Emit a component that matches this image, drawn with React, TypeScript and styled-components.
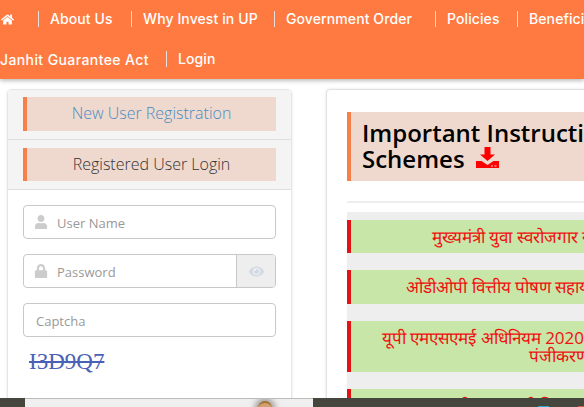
import React from 'react';
import styled, {createGlobalStyle} from 'styled-components';
import {FaHome, FaUser, FaLock, FaEye} from 'react-icons/fa';

const MENU_TOP = [
    {label: 'About Us', width: 93},
    {label: 'Why Invest in UP', width: 143},
    {label: 'Government Order', width: 161},
    {label: 'Policies', width: 82},
    {label: 'Beneficiary', width: 110},
];

const SCHEMES = [
    'मुख्यमंत्री युवा स्वरोजगार योजना हेतु निर्देश',
    'ओडीओपी वित्तीय पोषण सहायता योजना हेतु निर्देश',
    'यूपी एमएसएमई अधिनियम 2020 के तहत उद्यमियों के लिए\nपंजीकरण',
    'मुख्यमंत्री युवा उद्यमी विकास अभियान हेतु निर्देश',
];

export default function App() {
    return (
        <Page>
            <GlobalStyle/>
            <Header>
                <MenuRow>
                    <HomeLink><FaHome size={13}/></HomeLink>
                    {MENU_TOP.map(item => <MenuItem key={item.label} width={item.width}>{item.label}</MenuItem>)}
                </MenuRow>
                <MenuRow>
                    <MenuFirst>Janhit Guarantee Act</MenuFirst>
                    <MenuItem width={70}>Login</MenuItem>
                </MenuRow>
            </Header>
            <Content>
                <LoginCard>
                    <TabRow>
                        <TabLabel active>New User Registration</TabLabel>
                    </TabRow>
                    <TabRow>
                        <TabLabel>Registered User Login</TabLabel>
                    </TabRow>
                    <Form>
                        <Field>
                            <FieldIcon><FaUser size={14}/></FieldIcon>
                            <Placeholder>User Name</Placeholder>
                        </Field>
                        <Field>
                            <FieldIcon><FaLock size={14}/></FieldIcon>
                            <Placeholder>Password</Placeholder>
                            <EyeAddon><FaEye size={15}/></EyeAddon>
                        </Field>
                        <Field>
                            <CaptchaPlaceholder>Captcha</CaptchaPlaceholder>
                        </Field>
                        <Captcha>I3D9Q7</Captcha>
                    </Form>
                </LoginCard>
                <MainCard>
                    <Heading>
                        Important Instructions for<br/>Schemes
                        <DownloadIcon viewBox="0 0 23 21">
                            <path d="M8.500 0h6v7.500H19L11.500 14 4 7.500h4.500z"/>
                            <path fillRule="evenodd" d="M0 14h5.500l6 4 6-4H23v7H0zM15 18.500v1h2v-1zM18.500 18.500v1h2v-1z"/>
                        </DownloadIcon>
                    </Heading>
                    <Divider/>
                    <SchemeList>
                        {SCHEMES.map(s => <Scheme key={s}>{s}</Scheme>)}
                    </SchemeList>
                </MainCard>
            </Content>
            <BottomBar>
                <DarkEnd/>
                <LightPart><Person/></LightPart>
                <DarkPart>
                    <Speck color="#2aa7c9" left={225} width={11}/>
                    <Speck color="#d9583a" left={265} width={7}/>
                </DarkPart>
            </BottomBar>
        </Page>
    );
}

const GlobalStyle = createGlobalStyle`
html, body {
    margin: 0;
    height: 100%;
    overflow: hidden;
    background: #fff;
}
`;

const Page = styled.div`
position: relative;
width: 584px;
height: 407px;
overflow: hidden;
font-family: "Open Sans", sans-serif;
`;

const Header = styled.header`
height: 79px;
background: #ff7a40;
box-shadow: 0 2px 4px rgba(0, 0, 0, 0.25);
color: #fff;
font-family: Inter, sans-serif;
font-size: 14px;
font-weight: 500;
letter-spacing: 0.1px;
display: flex;
flex-direction: column;
gap: 2px;
`;

const MenuRow = styled.div`
display: flex;
height: 38px;
align-items: center;
white-space: nowrap;
`;

const HomeLink = styled.span`
display: flex;
width: 38px;
flex-shrink: 0;
padding-left: 1px;
box-sizing: border-box;
`;

const MenuItem = styled.span<{width: number}>`
border-left: 1px solid #e6dcd8;
line-height: 16px;
padding-left: 11px;
box-sizing: border-box;
flex-shrink: 0;
width: ${props => props.width}px;
`;

const MenuFirst = styled.span`
width: 166px;
flex-shrink: 0;
letter-spacing: 0.4px;
`;

const Content = styled.main`
display: flex;
align-items: flex-start;
padding: 10px 0 0 7px;
`;

const LoginCard = styled.section`
width: 285px;
height: 330px;
flex-shrink: 0;
box-sizing: border-box;
border: 1px solid #e6e6e6;
border-radius: 4px;
box-shadow: 0 1px 3px rgba(0, 0, 0, 0.1);
`;

const TabRow = styled.div`
padding: 8px 15px;
height: 50px;
box-sizing: border-box;
background: #f4f4f4;
border-bottom: 1px solid #dedede;
display: flex;
&:first-child {
    padding-top: 7px;
}
`;

const TabLabel = styled.div<{active?: boolean}>`
flex: 1;
display: flex;
align-items: center;
justify-content: center;
padding-bottom: 2px;
background: #efd9ce;
border-left: 4px solid #f7804a;
font-size: 16px;
font-weight: 300;
color: ${props => props.active ? '#4a8cc0' : '#333'};
`;

const Form = styled.div`
padding: 15px 15px 0;
display: flex;
flex-direction: column;
gap: 15px;
`;

const Field = styled.div`
height: 34px;
box-sizing: border-box;
border: 1px solid #c8c8c8;
border-radius: 4px;
display: flex;
align-items: center;
overflow: hidden;
`;

const FieldIcon = styled.span`
display: flex;
width: 33px;
justify-content: center;
padding-left: 1px;
box-sizing: border-box;
color: #ccc;
`;

const Placeholder = styled.span`
flex: 1;
padding-top: 2px;
font-size: 13px;
color: #999;
`;

const CaptchaPlaceholder = styled(Placeholder)`
padding-left: 12px;
`;

const EyeAddon = styled.span`
width: 38px;
align-self: stretch;
display: flex;
align-items: center;
justify-content: center;
background: #eee;
border-left: 1px solid #c8c8c8;
color: #d3d9e4;
`;

const Captcha = styled.div`
margin-top: -5px;
width: 90px;
height: 30px;
font-family: "Liberation Serif", serif;
font-size: 23px;
line-height: 30px;
color: #4a62b5;
text-decoration: line-through;
padding-left: 6px;
box-sizing: border-box;
`;

const MainCard = styled.section`
margin-left: 34px;
width: 460px;
height: 330px;
flex-shrink: 0;
box-sizing: border-box;
border: 1px solid #e2e2e2;
border-radius: 4px;
box-shadow: 0 0 3px rgba(0, 0, 0, 0.12);
padding: 22px 20px 0;
`;

const Heading = styled.h2`
margin: 0;
height: 69px;
box-sizing: border-box;
background: #efd9ce;
border-left: 4px solid #f7804a;
padding: 8px 0 0 11px;
font-size: 24px;
line-height: 26px;
font-weight: 600;
color: #000;
`;

const DownloadIcon = styled.svg`
display: inline-block;
width: 23px;
height: 21px;
margin-left: 11px;
fill: #f00;
vertical-align: 0;
`;

const Divider = styled.div`
margin-top: 20px;
border-top: 2px solid #eee;
`;

const SchemeList = styled.div`
margin-top: 9px;
background: #eee;
padding: 8px 0;
display: flex;
flex-direction: column;
gap: 17px;
`;

const Scheme = styled.div`
background: #c8e6a8;
border-left: 4px solid #e01414;
color: #f01010;
font-size: 17px;
line-height: 18px;
text-align: center;
padding: 8px 0 7px;
white-space: pre-line;
&:nth-child(2) {
    padding-bottom: 8px;
}
`;

const BottomBar = styled.footer`
position: absolute;
left: 0;
right: 0;
bottom: 0;
height: 9px;
display: flex;
`;

const DarkEnd = styled.div`
width: 25px;
background: #45463d;
`;

const LightPart = styled.div`
position: relative;
width: 288px;
background: #efefef;
border-top: 1px solid #bbb;
box-sizing: border-box;
overflow: hidden;
`;

const Person = styled.div`
position: absolute;
left: 233px;
top: 2px;
width: 14px;
height: 16px;
border-radius: 50%;
background: #d0a070;
border-top: 2px solid #a5702c;
box-sizing: border-box;
box-shadow: 0 0 6px 3px #98938f;
`;

const DarkPart = styled.div`
position: relative;
flex: 1;
background: #45463d;
`;

const Speck = styled.span<{color: string; left: number; width: number}>`
position: absolute;
bottom: 0;
height: 1px;
left: ${props => props.left}px;
width: ${props => props.width}px;
background: ${props => props.color};
`;
